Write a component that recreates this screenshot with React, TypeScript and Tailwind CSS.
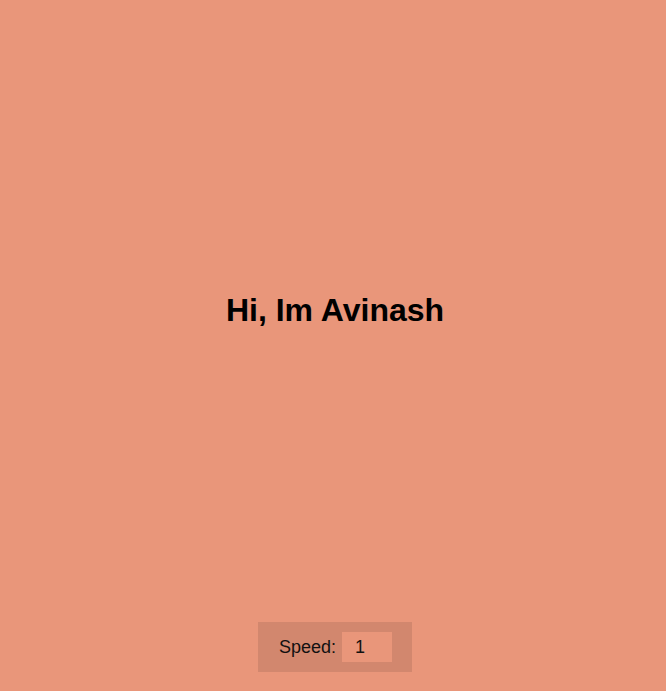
export default function App() {
  return (
    <div className="flex h-[691px] w-full flex-col bg-[#e9967a] pl-[4px] font-['Liberation_Sans',Arial,sans-serif] text-black">
      <div className="flex flex-1 items-center justify-center pb-[2px]">
        <h1 className="text-[32px] font-bold leading-[37px]">Hi, Im Avinash</h1>
      </div>
      <div className="mb-[19px] flex justify-center">
        <div className="flex items-center gap-[6px] bg-[#d2876e] py-[10px] pl-[21px] pr-[20px]">
          <label className="text-[18px] leading-[22px] text-[#111]">Speed:</label>
          <input
            type="number"
            defaultValue={1}
            className="h-[30px] w-[50px] bg-[#e9967a] pl-[13px] text-[18px] text-[#111] outline-none [appearance:textfield]"
          />
        </div>
      </div>
    </div>
  );
}
